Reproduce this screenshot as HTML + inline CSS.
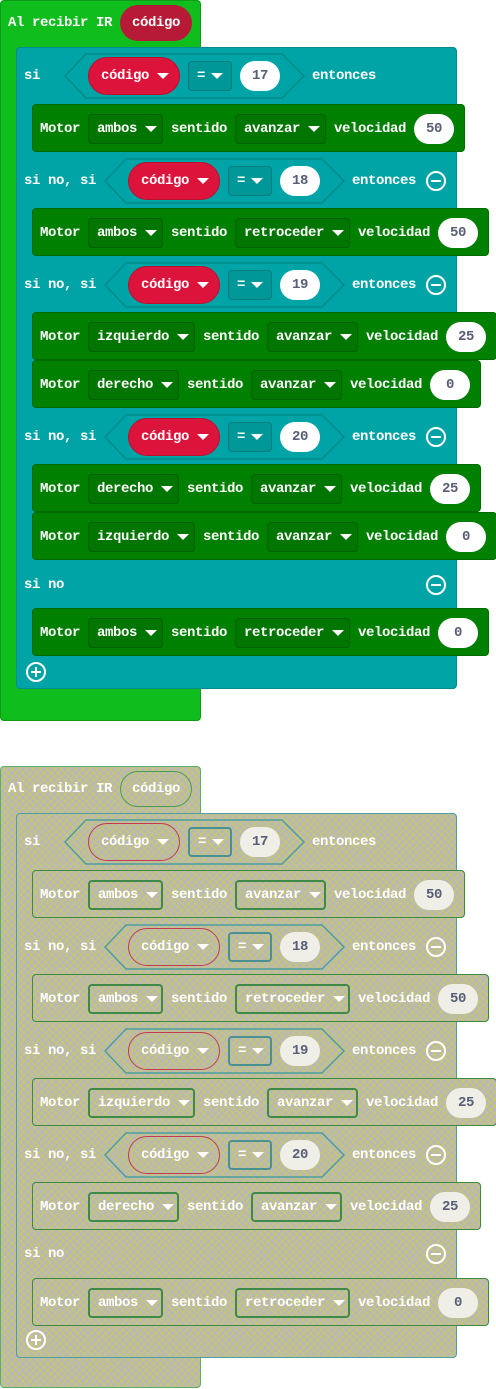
<!DOCTYPE html>
<html><head><meta charset="utf-8"><style>
*{margin:0;padding:0;box-sizing:border-box}
body{width:496px;height:1389px;background:#fff;position:relative;overflow:hidden;font-family:"Liberation Mono",monospace;font-weight:700;font-size:14px;letter-spacing:-0.4px;color:#fff}
.a{position:absolute}
.ev{background:#0fbd1c;border:1px solid #0c9a17;border-radius:4px}
.if{background:#00a4a6;border:1px solid #008d8f;border-radius:4px}
.mo{background:#008000;border:1px solid #006a00;border-radius:4px}
.row{position:absolute;height:40px;display:flex;align-items:center;gap:8px;white-space:nowrap}
.dd{height:30px;border:1px solid rgba(0,0,0,.18);background:rgba(0,0,0,.08);border-radius:4px;display:flex;align-items:center;padding-left:8px}
.ar{display:inline-block;width:0;height:0;border-left:6px solid transparent;border-right:6px solid transparent;border-top:6px solid #fff;margin-left:8px}
.num{height:30px;width:40px;border-radius:15px;background:#fff;color:#575e75;display:flex;align-items:center;justify-content:center}
.cod{height:38px;width:92px;border-radius:19px;background:#dc143c;border:1px solid #b8102f;display:flex;align-items:center;padding-left:12px}
.eq{height:30px;width:44px;border:1px solid rgba(0,0,0,.18);background:rgba(0,0,0,.08);border-radius:4px;display:flex;align-items:center;padding-left:8px}
.eq .ar{margin-left:6px}
.hex{position:absolute}
.circ{position:absolute;width:20px;height:20px;border:2px solid #fff;border-radius:50%}
.circ:before{content:"";position:absolute;left:3px;top:7px;width:10px;height:2px;background:#fff}
.plus:after{content:"";position:absolute;left:7px;top:3px;width:2px;height:10px;background:#fff}
.h .ev,.h .if,.h .mo{background:repeating-linear-gradient(45deg,transparent 0 4px,rgba(220,220,0,.42) 4px 5px),repeating-linear-gradient(-45deg,transparent 0 4px,rgba(220,220,0,.42) 4px 5px),#b8b8b8}
.h .ev{border-color:#5cae64}
.h .if{border-color:#4aa0a2}
.h .mo{border-color:#3d8a3d}
.h .dd,.h .eq{background:transparent;border:2px solid #3f8a48}
.h .eq{border-color:#4a9194}
.h .cod{background:transparent;border:1.5px solid #c43a50}
.h .evc{background:transparent!important;border:1.5px solid #4a9e52!important}
.h .num{background:#efefe8}
</style></head><body>

<div class="a" style="left:0;top:0;width:496px;height:722px">
<div class="a ev" style="left:0;top:0;width:201px;height:721px"></div>
<div class="row" style="left:8px;top:3px">Al recibir IR<div class="evc" style="height:36px;width:72px;border-radius:18px;background:#b71a36;display:flex;align-items:center;justify-content:center">código</div></div>
<div class="a if" style="left:16px;top:47px;width:441px;height:642px"></div>

<div class="row" style="left:24px;top:56px">si</div>
<svg class="hex" style="left:64px;top:53px" width="242" height="46"><polygon points="22,1 218,1 240,23 218,45 22,45 1,23" fill="none" stroke="#008a8c" stroke-width="1.5"/></svg>
<div class="row" style="left:88px;top:56px"><div class="cod">código<span class="ar"></span></div><div class="eq">=<span class="ar"></span></div><div class="num">17</div></div>
<div class="row" style="left:312px;top:56px">entonces</div>
<div class="a mo" style="left:32px;top:104px;width:433px;height:48px"></div>
<div class="row" style="left:40px;top:109px">Motor<div class="dd" style="width:75px">ambos<span class="ar"></span></div>sentido<div class="dd" style="width:91px">avanzar<span class="ar"></span></div>velocidad<div class="num">50</div></div>

<div class="row" style="left:24px;top:161px">si no, si</div>
<svg class="hex" style="left:104px;top:158px" width="242" height="46"><polygon points="22,1 218,1 240,23 218,45 22,45 1,23" fill="none" stroke="#008a8c" stroke-width="1.5"/></svg>
<div class="row" style="left:128px;top:161px"><div class="cod">código<span class="ar"></span></div><div class="eq">=<span class="ar"></span></div><div class="num">18</div></div>
<div class="row" style="left:352px;top:161px">entonces</div>
<div class="circ" style="left:426px;top:171px"></div>
<div class="a mo" style="left:32px;top:208px;width:457px;height:48px"></div>
<div class="row" style="left:40px;top:213px">Motor<div class="dd" style="width:75px">ambos<span class="ar"></span></div>sentido<div class="dd" style="width:115px">retroceder<span class="ar"></span></div>velocidad<div class="num">50</div></div>

<div class="row" style="left:24px;top:265px">si no, si</div>
<svg class="hex" style="left:104px;top:262px" width="242" height="46"><polygon points="22,1 218,1 240,23 218,45 22,45 1,23" fill="none" stroke="#008a8c" stroke-width="1.5"/></svg>
<div class="row" style="left:128px;top:265px"><div class="cod">código<span class="ar"></span></div><div class="eq">=<span class="ar"></span></div><div class="num">19</div></div>
<div class="row" style="left:352px;top:265px">entonces</div>
<div class="circ" style="left:426px;top:275px"></div>
<div class="a mo" style="left:32px;top:312px;width:465px;height:48px"></div>
<div class="row" style="left:40px;top:317px">Motor<div class="dd" style="width:107px">izquierdo<span class="ar"></span></div>sentido<div class="dd" style="width:91px">avanzar<span class="ar"></span></div>velocidad<div class="num">25</div></div>
<div class="a mo" style="left:32px;top:360px;width:449px;height:48px"></div>
<div class="row" style="left:40px;top:365px">Motor<div class="dd" style="width:91px">derecho<span class="ar"></span></div>sentido<div class="dd" style="width:91px">avanzar<span class="ar"></span></div>velocidad<div class="num">0</div></div>

<div class="row" style="left:24px;top:417px">si no, si</div>
<svg class="hex" style="left:104px;top:414px" width="242" height="46"><polygon points="22,1 218,1 240,23 218,45 22,45 1,23" fill="none" stroke="#008a8c" stroke-width="1.5"/></svg>
<div class="row" style="left:128px;top:417px"><div class="cod">código<span class="ar"></span></div><div class="eq">=<span class="ar"></span></div><div class="num">20</div></div>
<div class="row" style="left:352px;top:417px">entonces</div>
<div class="circ" style="left:426px;top:427px"></div>
<div class="a mo" style="left:32px;top:464px;width:449px;height:48px"></div>
<div class="row" style="left:40px;top:469px">Motor<div class="dd" style="width:91px">derecho<span class="ar"></span></div>sentido<div class="dd" style="width:91px">avanzar<span class="ar"></span></div>velocidad<div class="num">25</div></div>
<div class="a mo" style="left:32px;top:512px;width:465px;height:48px"></div>
<div class="row" style="left:40px;top:517px">Motor<div class="dd" style="width:107px">izquierdo<span class="ar"></span></div>sentido<div class="dd" style="width:91px">avanzar<span class="ar"></span></div>velocidad<div class="num">0</div></div>

<div class="row" style="left:24px;top:565px">si no</div>
<div class="circ" style="left:426px;top:575px"></div>
<div class="a mo" style="left:32px;top:608px;width:457px;height:48px"></div>
<div class="row" style="left:40px;top:613px">Motor<div class="dd" style="width:75px">ambos<span class="ar"></span></div>sentido<div class="dd" style="width:115px">retroceder<span class="ar"></span></div>velocidad<div class="num">0</div></div>
<div class="circ plus" style="left:26px;top:662px"></div>
</div>

<div class="a h" style="left:0;top:766px;width:496px;height:623px">
<div class="a ev" style="left:0;top:0;width:201px;height:622px"></div>
<div class="row" style="left:8px;top:3px">Al recibir IR<div class="evc" style="height:36px;width:72px;border-radius:18px;display:flex;align-items:center;justify-content:center">código</div></div>
<div class="a if" style="left:16px;top:47px;width:441px;height:545px"></div>

<div class="row" style="left:24px;top:56px">si</div>
<svg class="hex" style="left:64px;top:53px" width="242" height="46"><polygon points="22,1 218,1 240,23 218,45 22,45 1,23" fill="none" stroke="#4a9ea0" stroke-width="1.5"/></svg>
<div class="row" style="left:88px;top:56px"><div class="cod">código<span class="ar"></span></div><div class="eq">=<span class="ar"></span></div><div class="num">17</div></div>
<div class="row" style="left:312px;top:56px">entonces</div>
<div class="a mo" style="left:32px;top:104px;width:433px;height:48px"></div>
<div class="row" style="left:40px;top:109px">Motor<div class="dd" style="width:75px">ambos<span class="ar"></span></div>sentido<div class="dd" style="width:91px">avanzar<span class="ar"></span></div>velocidad<div class="num">50</div></div>

<div class="row" style="left:24px;top:161px">si no, si</div>
<svg class="hex" style="left:104px;top:158px" width="242" height="46"><polygon points="22,1 218,1 240,23 218,45 22,45 1,23" fill="none" stroke="#4a9ea0" stroke-width="1.5"/></svg>
<div class="row" style="left:128px;top:161px"><div class="cod">código<span class="ar"></span></div><div class="eq">=<span class="ar"></span></div><div class="num">18</div></div>
<div class="row" style="left:352px;top:161px">entonces</div>
<div class="circ" style="left:426px;top:171px"></div>
<div class="a mo" style="left:32px;top:208px;width:457px;height:48px"></div>
<div class="row" style="left:40px;top:213px">Motor<div class="dd" style="width:75px">ambos<span class="ar"></span></div>sentido<div class="dd" style="width:115px">retroceder<span class="ar"></span></div>velocidad<div class="num">50</div></div>

<div class="row" style="left:24px;top:265px">si no, si</div>
<svg class="hex" style="left:104px;top:262px" width="242" height="46"><polygon points="22,1 218,1 240,23 218,45 22,45 1,23" fill="none" stroke="#4a9ea0" stroke-width="1.5"/></svg>
<div class="row" style="left:128px;top:265px"><div class="cod">código<span class="ar"></span></div><div class="eq">=<span class="ar"></span></div><div class="num">19</div></div>
<div class="row" style="left:352px;top:265px">entonces</div>
<div class="circ" style="left:426px;top:275px"></div>
<div class="a mo" style="left:32px;top:312px;width:465px;height:48px"></div>
<div class="row" style="left:40px;top:317px">Motor<div class="dd" style="width:107px">izquierdo<span class="ar"></span></div>sentido<div class="dd" style="width:91px">avanzar<span class="ar"></span></div>velocidad<div class="num">25</div></div>

<div class="row" style="left:24px;top:369px">si no, si</div>
<svg class="hex" style="left:104px;top:366px" width="242" height="46"><polygon points="22,1 218,1 240,23 218,45 22,45 1,23" fill="none" stroke="#4a9ea0" stroke-width="1.5"/></svg>
<div class="row" style="left:128px;top:369px"><div class="cod">código<span class="ar"></span></div><div class="eq">=<span class="ar"></span></div><div class="num">20</div></div>
<div class="row" style="left:352px;top:369px">entonces</div>
<div class="circ" style="left:426px;top:379px"></div>
<div class="a mo" style="left:32px;top:416px;width:449px;height:48px"></div>
<div class="row" style="left:40px;top:421px">Motor<div class="dd" style="width:91px">derecho<span class="ar"></span></div>sentido<div class="dd" style="width:91px">avanzar<span class="ar"></span></div>velocidad<div class="num">25</div></div>

<div class="row" style="left:24px;top:468px">si no</div>
<div class="circ" style="left:426px;top:478px"></div>
<div class="a mo" style="left:32px;top:512px;width:457px;height:48px"></div>
<div class="row" style="left:40px;top:517px">Motor<div class="dd" style="width:75px">ambos<span class="ar"></span></div>sentido<div class="dd" style="width:115px">retroceder<span class="ar"></span></div>velocidad<div class="num">0</div></div>
<div class="circ plus" style="left:26px;top:564px"></div>
</div>
</body></html>
